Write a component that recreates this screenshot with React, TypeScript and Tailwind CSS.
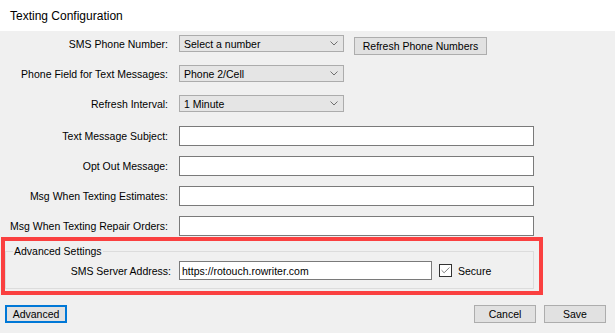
import { Check } from "lucide-react";

const labelCls = "w-[168px] shrink-0 text-right";

function Combo({ value }: { value: string }) {
  return (
    <div className="ml-[11px] w-[165px] h-[17px] flex items-center justify-between bg-[#e5e5e5] border border-[#acacac] pl-[4px] pr-[5px]">
      <span>{value}</span>
      <svg width="8" height="5" viewBox="0 0 8 5" className="text-[#707070]">
        <polyline points="0.5,0.5 4,4 7.5,0.5" fill="none" stroke="currentColor" strokeWidth="1" />
      </svg>
    </div>
  );
}

function TextBox({ value = "", className = "" }: { value?: string; className?: string }) {
  return (
    <div className={`h-[20px] flex items-center bg-white border border-[#7a7a7a] pl-[2px] ${className}`}>
      {value}
    </div>
  );
}

function Button({ children, className = "" }: { children: React.ReactNode; className?: string }) {
  return (
    <button className={`h-[18px] flex items-center justify-center bg-[#e1e1e1] border border-[#adadad] leading-none ${className}`}>
      {children}
    </button>
  );
}

export default function App() {
  return (
    <div className="w-[615px] h-[333px] bg-white text-black text-[10.5px] leading-[12px] font-['Liberation_Sans',Arial,sans-serif] flex flex-col overflow-hidden">
      <div className="h-[31px] shrink-0 flex items-center pl-[10px] text-[12px]">Texting Configuration</div>

      <div className="flex-1 bg-[#f0f0f0] flex flex-col pt-[4px]">
        <div className="flex items-start h-[17px]">
          <div className={`${labelCls} h-[17px] flex items-center justify-end`}>SMS Phone Number:</div>
          <Combo value="Select a number" />
          <Button className="ml-[10px] mt-[2px] w-[133px]">Refresh Phone Numbers</Button>
        </div>
        <div className="flex items-center mt-[13px]">
          <div className={labelCls}>Phone Field for Text Messages:</div>
          <Combo value="Phone 2/Cell" />
        </div>
        <div className="flex items-center mt-[13px]">
          <div className={labelCls}>Refresh Interval:</div>
          <Combo value="1 Minute" />
        </div>

        <div className="flex items-center mt-[14px]">
          <div className={labelCls}>Text Message Subject:</div>
          <TextBox className="ml-[11px] w-[355px]" />
        </div>
        <div className="flex items-center mt-[10px]">
          <div className={labelCls}>Opt Out Message:</div>
          <TextBox className="ml-[11px] w-[355px]" />
        </div>
        <div className="flex items-center mt-[10px]">
          <div className={labelCls}>Msg When Texting Estimates:</div>
          <TextBox className="ml-[11px] w-[355px]" />
        </div>
        <div className="flex items-center mt-[10px]">
          <div className={labelCls}>Msg When Texting Repair Orders:</div>
          <TextBox className="ml-[11px] w-[355px]" />
        </div>

        {/* highlighted advanced group */}
        <div className="mt-[1px] ml-[1px] w-[542px] h-[58px] border-4 border-[#fa4040]">
          <fieldset className="mt-[4px] w-[529px] border border-[#dcdcdc] pb-[8px]">
            <legend className="ml-[7px] px-[1px] leading-[12px]">Advanced Settings</legend>
            <div className="flex items-center mt-[4px]">
              <div className="w-[165px] shrink-0 text-right">SMS Server Address:</div>
              <TextBox value="https://rotouch.rowriter.com" className="ml-[8px] w-[253px] !h-[19px]" />
              <div className="ml-[7px] w-[13px] h-[13px] border border-[#333333] bg-white flex items-center justify-center">
                <Check className="w-[11px] h-[11px] text-[#444444]" strokeWidth={1.5} />
              </div>
              <span className="ml-[6px]">Secure</span>
            </div>
          </fieldset>
        </div>

        <div className="flex items-center mt-[10px] pl-[5px] pr-[9px]">
          <button className="w-[62px] h-[18px] flex items-center justify-center bg-[#e1e1e1] border-2 border-[#0078d7] leading-none">
            Advanced
          </button>
          <div className="flex-1" />
          <Button className="w-[62px]">Cancel</Button>
          <Button className="ml-[8px] w-[62px]">Save</Button>
        </div>
      </div>
    </div>
  );
}
